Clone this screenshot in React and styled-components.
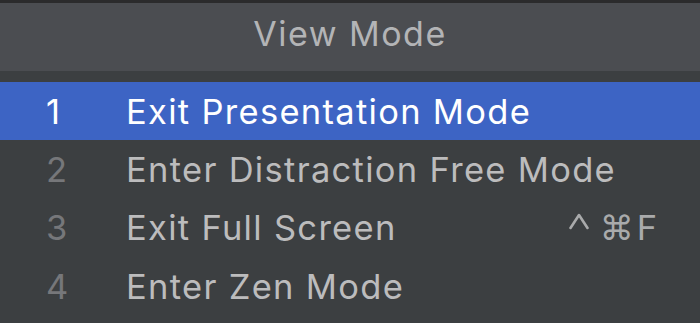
import React from "react";
import styled, { createGlobalStyle } from "styled-components";

const Global = createGlobalStyle`
  html, body { margin: 0; padding: 0; background: #3c3f41; }
  body { font-family: Inter, "Noto Sans", "DejaVu Sans", sans-serif; -webkit-font-smoothing: antialiased; }
`;

const Panel = styled.div`
  width: 700px;
  height: 323px;
  background: #3c3f41;
  border-top: 3px solid #2b2b2c;
  box-sizing: border-box;
  display: flex;
  flex-direction: column;
  overflow: hidden;
`;

const Header = styled.div`
  height: 68px;
  background: #4b4d51;
  display: flex;
  align-items: center;
  justify-content: center;
  padding-bottom: 7px;
  box-sizing: border-box;
  color: #b3b4b6;
  font-size: 34px;
  letter-spacing: 1.5px;
`;

const List = styled.div`
  padding-top: 11px;
  display: flex;
  flex-direction: column;
`;

const Row = styled.div`
  height: 58.3px;
  display: flex;
  align-items: center;
  padding: 0 43px 0 46px;
  background: ${(p) => (p.$active ? "#3d64c4" : "transparent")};
  font-size: 34.5px;
  letter-spacing: 1.3px;
`;

const Num = styled.span`
  width: 80px;
  color: ${(p) => (p.$active ? "#ffffff" : "#76777a")};
`;

const Label = styled.span`
  flex: 1;
  color: ${(p) => (p.$active ? "#ffffff" : "#bcbcbd")};
`;

const Shortcut = styled.span`
  display: flex;
  align-items: center;
  gap: 3px;
  color: ${(p) => (p.$active ? "#ffffff" : "#a9aaab")};
  letter-spacing: 0;
`;

const Cmd = styled.span`
  font-family: "DejaVu Sans", sans-serif;
  font-size: 34px;
`;

const Key = styled.span`
  font-size: 34.5px;
`;

const Caret = () => (
  <svg width="20" height="30" viewBox="0 0 20 30" style={{ marginRight: 8 }}>
    <path d="M1.5 15 L10 2 L18.5 15" fill="none" stroke="currentColor" strokeWidth="2.6" strokeLinecap="round" strokeLinejoin="round" />
  </svg>
);

const items = [
  { n: "1", label: "Exit Presentation Mode", active: true },
  { n: "2", label: "Enter Distraction Free Mode" },
  { n: "3", label: "Exit Full Screen", shortcut: true },
  { n: "4", label: "Enter Zen Mode" },
];

export default function App() {
  return (
    <>
      <Global />
      <Panel>
        <Header>View Mode</Header>
        <List>
          {items.map((it) => (
            <Row key={it.n} $active={it.active}>
              <Num $active={it.active}>{it.n}</Num>
              <Label $active={it.active}>{it.label}</Label>
              {it.shortcut && (
                <Shortcut $active={it.active}>
                  <Caret />
                  <Cmd>⌘</Cmd>
                  <Key>F</Key>
                </Shortcut>
              )}
            </Row>
          ))}
        </List>
      </Panel>
    </>
  );
}
